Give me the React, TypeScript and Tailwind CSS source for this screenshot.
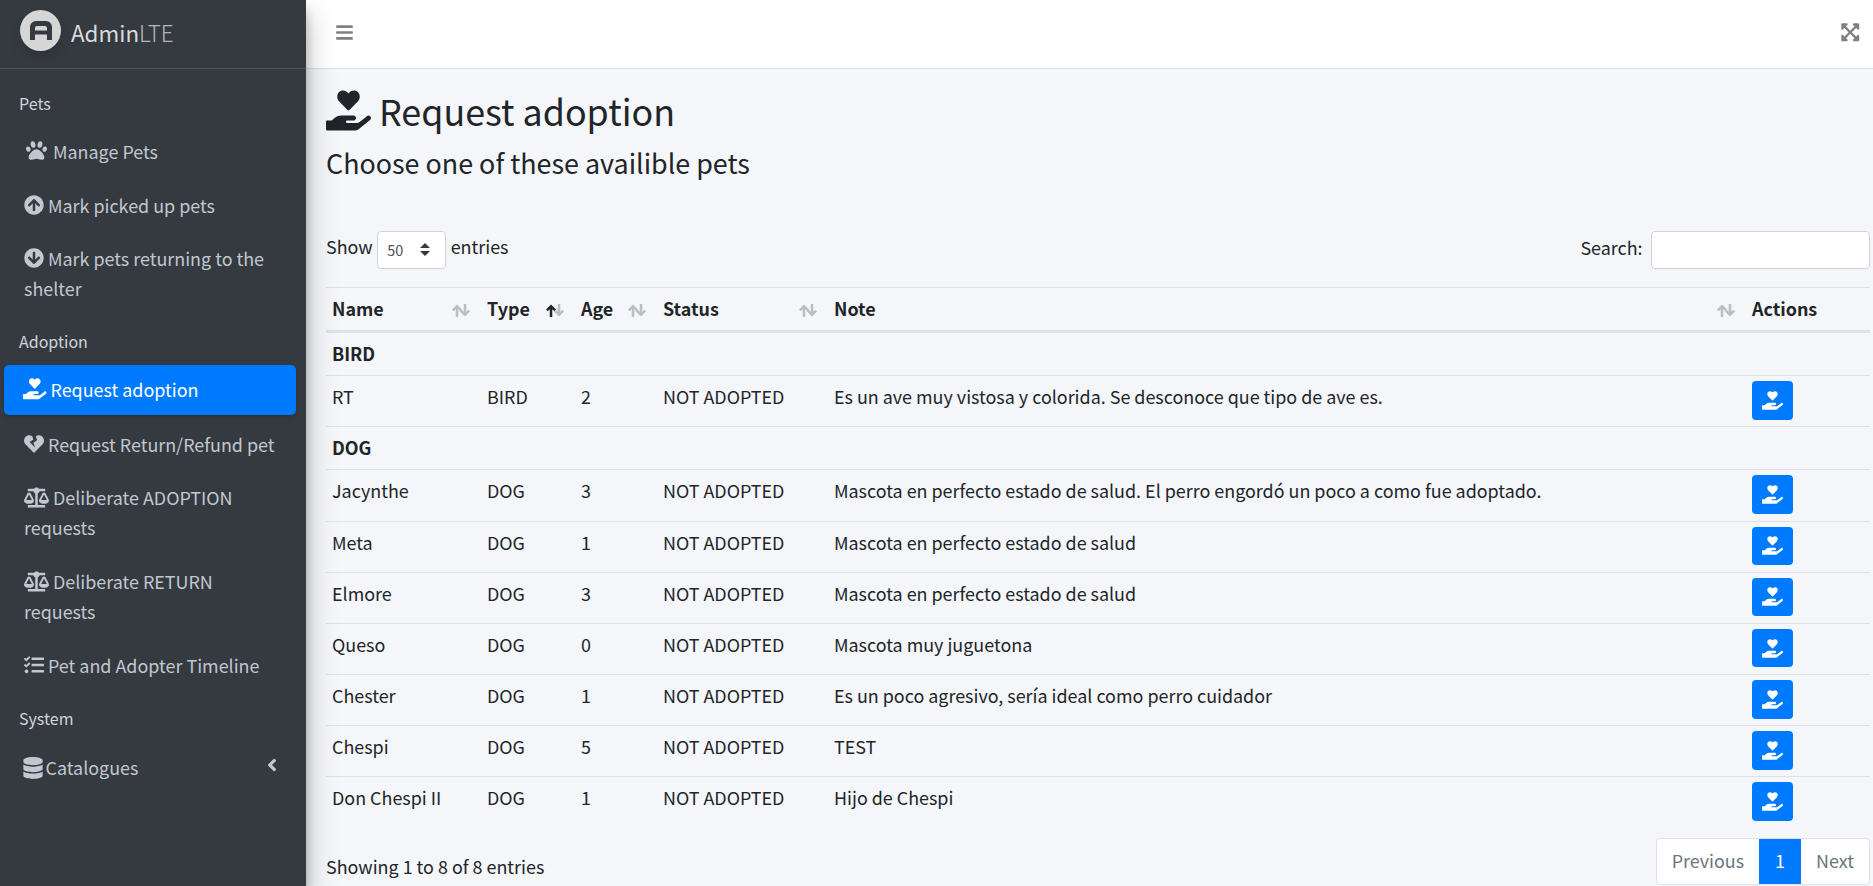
import { FaHandHoldingHeart, FaPaw, FaArrowCircleUp, FaArrowCircleDown, FaHeartBroken, FaBalanceScale, FaTasks, FaDatabase, FaAngleLeft, FaBars, FaExpandArrowsAlt } from "react-icons/fa";
import type { ReactNode } from "react";

const font = { fontFamily: '"Noto Sans CJK SC", "Noto Sans", sans-serif' };

function NavItem({ icon, children, active }: { icon: ReactNode; children: ReactNode; active?: boolean }) {
  return (
    <div className={`mb-[3.6px] ml-1 mr-[10px] rounded-[5px] px-[20px] text-[17.92px] leading-[30px] ${active ? "bg-[#007bff] pb-[11px] pt-[9px] text-white shadow-md" : "py-[10px] text-[#c2c7d0]"}`}>
      {icon}
      {children}
    </div>
  );
}

function Section({ children, tight }: { children: ReactNode; tight?: boolean }) {
  return <div className={`px-[19px] pt-[12.5px] text-[16px] leading-[24px] text-[#d0d4db] ${tight ? "pb-[11px]" : "pb-[12px]"}`}>{children}</div>;
}

function SortArrows({ active }: { active?: boolean }) {
  return (
    <svg width="18" height="13" viewBox="0 0 18 13" className="mt-[5px] shrink-0">
      <path d="M5 13V2M.8 6.4L5 2.2l4.2 4.2" fill="none" stroke={active ? "#212529" : "#bbbdbf"} strokeWidth="2.5" />
      <path d="M13 0v11M8.8 6.6l4.2 4.2 4.2-4.2" fill="none" stroke="#bbbdbf" strokeWidth="2.5" />
    </svg>
  );
}

const rows: [string, string, string][] = [
  ["Jacynthe", "3", "Mascota en perfecto estado de salud. El perro engordó un poco a como fue adoptado."],
  ["Meta", "1", "Mascota en perfecto estado de salud"],
  ["Elmore", "3", "Mascota en perfecto estado de salud"],
  ["Queso", "0", "Mascota muy juguetona"],
  ["Chester", "1", "Es un poco agresivo, sería ideal como perro cuidador"],
  ["Chespi", "5", "TEST"],
  ["Don Chespi II", "1", "Hijo de Chespi"],
];

const gridCols = "grid grid-cols-[155px_94px_82px_171px_918px_1fr]";

function PetRow({ name, type, age, note }: { name: string; type: string; age: string; note: string }) {
  return (
    <div className={`${gridCols} h-[51.15px] items-start border-t border-[#dee2e6] pt-[5px] text-[17.92px] leading-[30px]`}>
      <div className="pl-[6px]">{name}</div>
      <div className="pl-[6px]">{type}</div>
      <div className="pl-[6px]">{age}</div>
      <div className="pl-[6px]">NOT ADOPTED</div>
      <div className="whitespace-nowrap pl-[6px]">{note}</div>
      <div className="pl-[6px]">
        <div className="flex h-[38.5px] w-[41px] items-center justify-center rounded-[4px] bg-[#007bff]">
          <FaHandHoldingHeart className="text-[21px] text-white" />
        </div>
      </div>
    </div>
  );
}

function HeadCell({ label, active }: { label: string; active?: boolean }) {
  return (
    <div className="flex items-center justify-between pl-[6px] pr-[11px]">
      <span className="font-bold">{label}</span>
      <SortArrows active={active} />
    </div>
  );
}

export default function App() {
  return (
    <div style={font} className="flex h-[886px] w-[1873px] overflow-hidden bg-[#f4f6f9] text-[#212529]">
      <aside className="z-10 h-full w-[306px] shrink-0 bg-[#343a40] shadow-[0_14px_28px_rgba(0,0,0,0.25),0_10px_10px_rgba(0,0,0,0.22)]">
        <div className="flex h-[69px] items-start border-b border-[#4b545c] pl-[20px] pt-[10px]">
          <div className="flex h-[41px] w-[41px] items-center justify-center rounded-full bg-[#d6d6d6] shadow-lg">
            <svg width="22" height="19" viewBox="0 0 22 19">
              <path fillRule="evenodd" d="M0 19V6a6 6 0 0 1 6-6h10a6 6 0 0 1 6 6v13h-5v-5.5H5V19zM5 9.5h12V7a2 2 0 0 0-2-2H7a2 2 0 0 0-2 2z" fill="#343a40" />
            </svg>
          </div>
          <span className="ml-[10px] mt-[7px] text-[22.4px] leading-[30px] text-[#d9dbdd]">
            Admin<span className="font-light text-[#b4b7ba]">LTE</span>
          </span>
        </div>
        <div className="pt-[9.5px]">
          <Section tight>Pets</Section>
          <NavItem icon={<FaPaw className="ml-[2px] mr-[6px] inline-block align-[-2px] text-[21px]" />}>Manage Pets</NavItem>
          <NavItem icon={<FaArrowCircleUp className="mr-[4px] inline-block align-[-2px] text-[20px]" />}>Mark picked up pets</NavItem>
          <NavItem icon={<FaArrowCircleDown className="mr-[4px] inline-block align-[-2px] text-[20px]" />}>Mark pets returning to the shelter</NavItem>
          <Section>Adoption</Section>
          <NavItem active icon={<FaHandHoldingHeart className="-ml-[1px] mr-[4px] inline-block align-[-3px] text-[23.5px]" />}>Request adoption</NavItem>
          <NavItem icon={<FaHeartBroken className="mr-[4px] inline-block align-[-2px] text-[20px]" />}>Request Return/Refund pet</NavItem>
          <NavItem icon={<FaBalanceScale className="mr-[4px] inline-block align-[-5px] text-[25px]" />}>Deliberate ADOPTION requests</NavItem>
          <NavItem icon={<FaBalanceScale className="mr-[4px] inline-block align-[-5px] text-[25px]" />}>Deliberate RETURN requests</NavItem>
          <NavItem icon={<FaTasks className="mr-[4px] inline-block align-[-2px] text-[20px]" />}>Pet and Adopter Timeline</NavItem>
          <Section>System</Section>
          <div className="ml-1 mr-[10px] flex items-center justify-between px-[20px] py-[10px] text-[17.92px] leading-[30px] text-[#c2c7d0]">
            <span>
              <FaDatabase className="-ml-[2.5px] mr-[2px] inline-block align-[-4px] text-[22px]" />
              Catalogues
            </span>
            <FaAngleLeft className="-mr-[5.5px] -mt-[3px] text-[20px]" />
          </div>
        </div>
      </aside>
      <div className="flex min-w-0 flex-1 flex-col">
        <header className="flex h-[69px] shrink-0 items-center justify-between border-b border-[#dee2e6] bg-white pb-[3px] pl-[29px] pr-[13px] text-[#808080]">
          <FaBars className="text-[19px]" />
          <FaExpandArrowsAlt className="text-[20.5px]" />
        </header>
        <main className="flex-1 pl-[20px] pr-[3px]">
          <div className="mt-[17px] flex items-center gap-[8px] text-[35.84px] leading-[48px]">
            <FaHandHoldingHeart className="text-[45px]" />
            <span>Request adoption</span>
          </div>
          <div className="mt-[7.5px] text-[26.88px] leading-[42px]">Choose one of these availible pets</div>
          <div className="mt-[47.5px] flex h-[37.5px] items-center justify-between text-[17.92px]">
            <div className="flex items-center gap-[4.5px]">
              <span className="mb-[6px]">Show</span>
              <div className="flex h-[37.5px] w-[69px] items-center justify-between rounded-[4px] border border-[#ced4da] bg-white pl-[9px] pr-[15px] text-[14.4px] text-[#495057]">
                <span>50</span>
                <svg width="10" height="13" viewBox="0 0 10 13"><path d="M5 0l5 5H0zM5 13L0 8h10z" fill="#343a40" /></svg>
              </div>
              <span className="mb-[6px]">entries</span>
            </div>
            <div className="flex items-center gap-[8.5px]">
              <span className="mb-[5px]">Search:</span>
              <div className="h-[37.5px] w-[219px] rounded-[4px] border border-[#ced4da] bg-white" />
            </div>
          </div>
          <div className="mt-[18.5px]">
            <div className={`${gridCols} h-[46px] items-center border-b-[3px] border-t border-[#dee2e6] pb-[2px] text-[17.92px]`}>
              <HeadCell label="Name" />
              <HeadCell label="Type" active />
              <HeadCell label="Age" />
              <HeadCell label="Status" />
              <HeadCell label="Note" />
              <div className="pl-[6px] font-bold">Actions</div>
            </div>
            <div className="h-[42px] pl-[6px] pt-[5px] text-[17.92px] font-bold leading-[30px]">BIRD</div>
            <PetRow name="RT" type="BIRD" age="2" note="Es un ave muy vistosa y colorida. Se desconoce que tipo de ave es." />
            <div className="h-[43.3px] border-t border-[#dee2e6] pl-[6px] pt-[5px] text-[17.92px] font-bold leading-[30px]">DOG</div>
            {rows.map((r) => (
              <PetRow key={r[0]} name={r[0]} type="DOG" age={r[1]} note={r[2]} />
            ))}
          </div>
          <div className="mt-[11px] flex items-start justify-between text-[17.92px] leading-[30px]">
            <span className="mt-[13px]">Showing 1 to 8 of 8 entries</span>
            <div className="flex h-[47px] items-stretch overflow-hidden rounded-[4px] border border-[#dee2e6] bg-white text-[#6c757d]">
              <span className="flex items-center px-[15px] pb-[3px]">Previous</span>
              <span className="flex w-[42px] items-center justify-center bg-[#007bff] pb-[3px] text-white">1</span>
              <span className="flex items-center px-[15px] pb-[3px]">Next</span>
            </div>
          </div>
        </main>
      </div>
    </div>
  );
}
